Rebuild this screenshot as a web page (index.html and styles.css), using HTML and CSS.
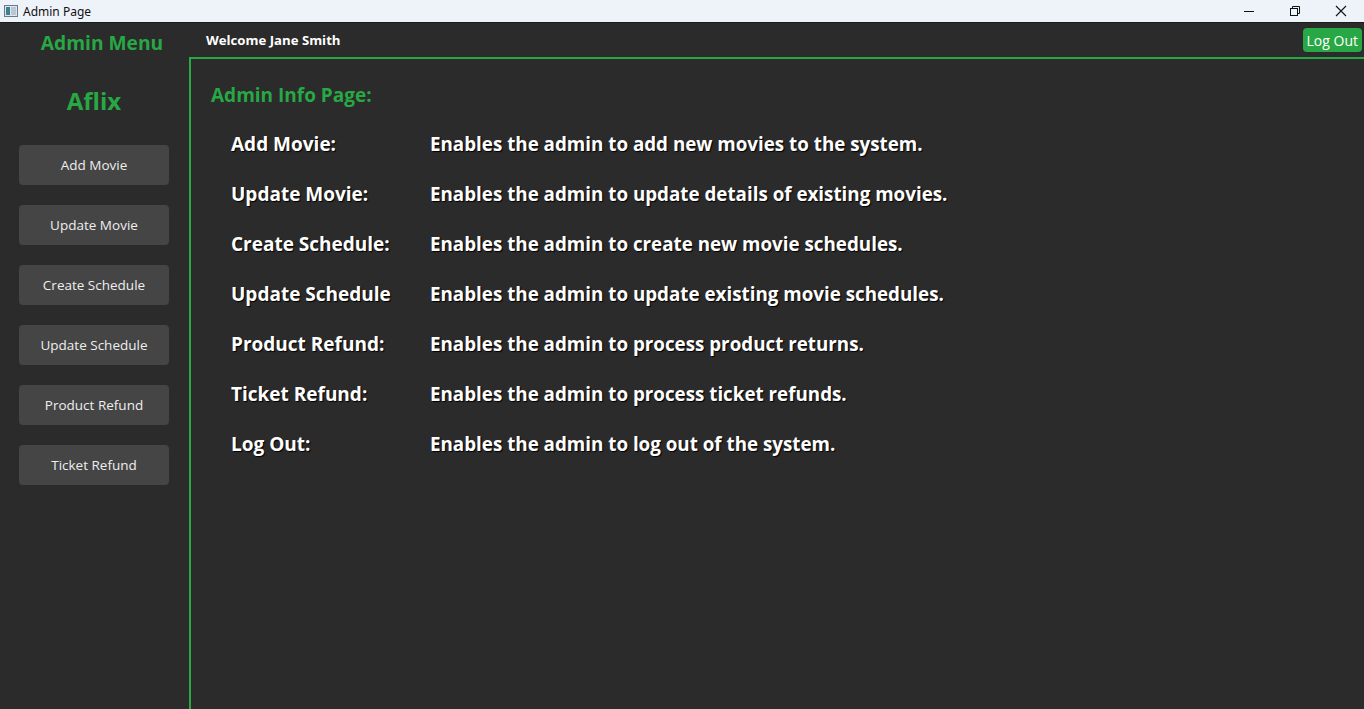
FILE: index.html
```html
<!DOCTYPE html>
<html>
<head>
<meta charset="utf-8">
<link rel="stylesheet" href="styles.css">
</head>
<body>
<div class="window">
  <div class="titlebar">
    <div class="title-left">
      <svg class="app-icon" width="14" height="12" viewBox="0 0 14 12">
        <rect x="0.5" y="0.5" width="13" height="11" fill="#dfe6ee" stroke="#6b7a89"/>
        <rect x="2" y="2" width="4" height="8" fill="#3f7f8f"/>
        <rect x="7" y="2" width="5" height="8" fill="#b9c7d3"/>
      </svg>
      <span class="title-text">Admin Page</span>
    </div>
    <div class="title-controls">
      <svg width="46" height="22" viewBox="0 0 46 22"><line x1="18" y1="11.5" x2="28" y2="11.5" stroke="#111" stroke-width="1"/></svg>
      <svg width="46" height="22" viewBox="0 0 46 22"><rect x="18.5" y="8.5" width="7" height="7" fill="none" stroke="#111"/><path d="M20.5 8.5 V6.5 H27.5 V13.5 H25.5" fill="none" stroke="#111"/></svg>
      <svg width="46" height="22" viewBox="0 0 46 22"><path d="M18 6 L28 16 M28 6 L18 16" stroke="#111" stroke-width="1.1"/></svg>
    </div>
  </div>
  <div class="app">
    <aside class="sidebar">
      <div class="menu-title">Admin Menu</div>
      <div class="brand">Aflix</div>
      <div class="nav">
        <button class="nav-btn">Add Movie</button>
        <button class="nav-btn">Update Movie</button>
        <button class="nav-btn">Create Schedule</button>
        <button class="nav-btn">Update Schedule</button>
        <button class="nav-btn">Product Refund</button>
        <button class="nav-btn">Ticket Refund</button>
      </div>
    </aside>
    <main class="main">
      <header class="topbar">
        <span class="welcome">Welcome Jane Smith</span>
        <button class="logout">Log Out</button>
      </header>
      <section class="content">
        <h1 class="page-title">Admin Info Page:</h1>
        <div class="info-list">
          <div class="info-row"><span class="label">Add Movie:</span><span class="desc">Enables the admin to add new movies to the system.</span></div>
          <div class="info-row"><span class="label">Update Movie:</span><span class="desc">Enables the admin to update details of existing movies.</span></div>
          <div class="info-row"><span class="label">Create Schedule:</span><span class="desc">Enables the admin to create new movie schedules.</span></div>
          <div class="info-row"><span class="label">Update Schedule</span><span class="desc">Enables the admin to update existing movie schedules.</span></div>
          <div class="info-row"><span class="label">Product Refund:</span><span class="desc">Enables the admin to process product returns.</span></div>
          <div class="info-row"><span class="label">Ticket Refund:</span><span class="desc">Enables the admin to process ticket refunds.</span></div>
          <div class="info-row"><span class="label">Log Out:</span><span class="desc">Enables the admin to log out of the system.</span></div>
        </div>
      </section>
    </main>
  </div>
</div>
</body>
</html>
```

FILE: styles.css
```css
* { box-sizing: border-box; }
html, body { margin: 0; padding: 0; }
body {
  width: 1364px;
  height: 709px;
  overflow: hidden;
  font-family: "Open Sans", "Noto Sans", sans-serif;
  background: #2b2b2b;
}
.window { display: flex; flex-direction: column; height: 709px; }
.titlebar {
  height: 23px;
  background: #eef3f9;
  border-bottom: 1px solid #1a1a1a;
  display: flex;
  justify-content: space-between;
  align-items: center;
  flex-shrink: 0;
}
.title-left { display: flex; align-items: center; padding-left: 4px; }
.app-icon { margin-right: 5px; }
.title-text { font-family: "Noto Sans", sans-serif; font-size: 12px; color: #111; }
.title-controls { display: flex; height: 22px; }
.app { flex: 1; display: flex; min-height: 0; }
.sidebar {
  width: 189px;
  padding-right: 1px;
  flex-shrink: 0;
  display: flex;
  flex-direction: column;
  align-items: center;
}
.menu-title {
  color: #28a745;
  font-weight: 700;
  font-size: 19.2px;
  margin-top: 6px;
  padding-left: 16px;
  line-height: 28px;
}
.brand {
  color: #28a745;
  font-weight: 700;
  font-size: 24px;
  line-height: 32px;
  margin-top: 28px;
}
.nav {
  margin-top: 28px;
  display: flex;
  flex-direction: column;
  gap: 20px;
}
.nav-btn {
  width: 150px;
  height: 40px;
  background: #454545;
  border: none;
  border-radius: 4px;
  color: #eeeeee;
  font-family: "Open Sans", "Noto Sans", sans-serif;
  font-size: 13.5px;
  padding: 0;
}
.main { flex: 1; display: flex; flex-direction: column; min-width: 0; }
.topbar {
  height: 34px;
  display: flex;
  justify-content: space-between;
  align-items: flex-start;
  padding-left: 17px;
  padding-right: 2px;
}
.welcome {
  color: #ffffff;
  font-weight: 700;
  font-size: 13.2px;
  margin-top: 8px;
}
.logout {
  margin-top: 5px;
  background: #28a745;
  border: none;
  border-radius: 4px;
  color: #ffffff;
  font-family: "Open Sans", "Noto Sans", sans-serif;
  font-size: 14px;
  height: 24px;
  padding: 0 4px;
}
.content {
  flex: 1;
  border-left: 2px solid #28a745;
  border-top: 2px solid #28a745;
  padding: 22px 0 0 20px;
}
.page-title {
  margin: 0;
  color: #28a745;
  font-size: 19px;
  font-weight: 700;
  line-height: 28px;
}
.info-list {
  margin-top: 10px;
  padding-left: 20px;
  display: flex;
  flex-direction: column;
}
.info-row {
  display: flex;
  height: 50px;
  align-items: center;
  color: #ffffff;
  font-weight: 700;
  font-size: 19px;
  text-shadow: 1px 1px 1px #000;
}
.label { width: 199px; flex-shrink: 0; }
.desc { font-size: 18.8px; }
```
